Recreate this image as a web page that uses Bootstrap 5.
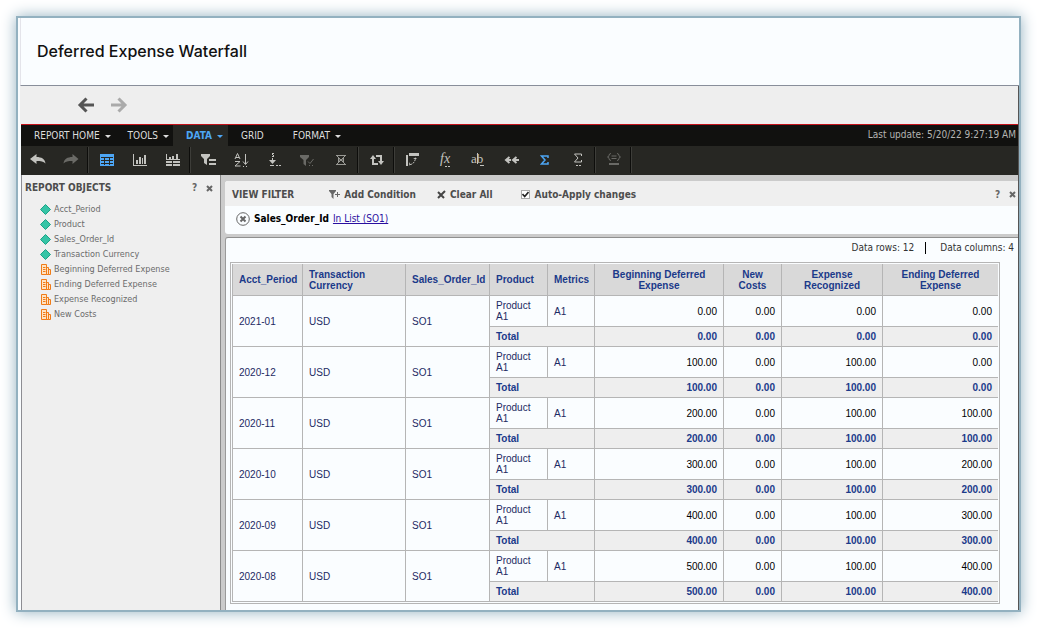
<!DOCTYPE html>
<html lang="en">
<head>
<meta charset="utf-8">
<meta name="viewport" content="width=device-width, initial-scale=1">
<title>Deferred Expense Waterfall</title>
<link href="https://cdn.jsdelivr.net/npm/bootstrap@5.3.0/dist/css/bootstrap.min.css" rel="stylesheet">
<style>
  body { font: 10px/12px "DejaVu Sans Condensed", "DejaVu Sans", sans-serif; background: #fff; color: #333; }
  button { color: inherit; }
  .frame { min-height: calc(100vh - 32px); border: 2px solid #93b1c0; box-shadow: 0 0 14px #93b1c0; background: #fafdff; padding-left: 2px; }
  .page-title { font: 500 16px/20px Inter, sans-serif; color: #111; padding: 23px 16px 24px; border-left: 1px solid #e4e4ea; border-bottom: 1px solid #888e9a; }
  .viewport-area { border-right: 1px solid #555; }
  .history { height: 38px; background: #eee; padding-left: 57px; gap: 15px; }
  .menubar { background: #11110f; border-top: 1px solid #c4121a; height: 22px; margin-left: 1px; color: #ddd; }
  .menubar button { padding: 0 0 0 13px; height: 21px; }
  .caret { display: inline-block; border: 3px solid transparent; border-top-color: currentColor; border-bottom: 0; margin-left: 5px; vertical-align: 1px; }
  .menubar .menu-tools { padding-left: 17px; }
  .menubar .menu-data { background: #272723; color: #4da6f5; font-weight: 700; margin-left: 4px; padding-right: 5px; }
  .menubar .menu-format { padding-left: 29px; }
  .stamp { color: #b4b4b2; padding-right: 2px; }
  .tools { background: #272723; height: 29px; margin-left: 1px; color: #c3c3bf; }
  .tool { width: 33px; height: 27px; }
  .tool svg { display: block; margin: 0 auto; }
  .split { width: 2px; margin: 1px 1px 2px 0; background: #0d0d0b; border-right: 1px solid #3d3d39; }
  .dim { color: #6a6a66; }
  .work { background: #cbcbcb; margin-left: 1px; }
  .objects { width: 200px; background: #efefef; border-left: 1px solid #8d8d93; border-right: 1px solid #8b8b8b; color: #6b6b6b; }
  .head-text { font-weight: 700; color: #4d4d4d; }
  .objects-head { height: 24px; padding: 2px 7px 0 3px; }
  .mini { color: #666; font-weight: 700; width: 7px; margin-left: 8px; }
  .objects li { font-size: 9px; height: 15px; gap: 3px; line-height: 15px; }
  .objects ul { padding: 3px 0 0 18px; }
  .objects li svg { flex: none; }
  .main-col { padding: 6px 0 0 4px; }
  .filter { border-radius: 3px 0 0 3px; background: #fafdff; height: 53px; overflow: hidden; }
  .filter-head { background: #efefef; height: 25px; padding: 2px 2px 0 7px; }
  .filter-head label, .filter-head button { gap: 4px; }
  .act-add { margin-left: 35px; }
  .act-clear { margin-left: 21px; }
  .act-auto { margin-left: 28px; }
  .act-auto input { appearance: none; width: 9px; height: 9px; margin: 0 1px 0 0; border: 1px solid #aaa; background: #fff url("data:image/svg+xml,%3Csvg xmlns='http://www.w3.org/2000/svg' viewBox='0 0 9 9'%3E%3Cpath d='M1.5 4 3.7 6.5 7.5 2' fill='none' stroke='%23222' stroke-width='1.6'/%3E%3C/svg%3E") center/9px; }
  .filter-body { height: 26px; padding-left: 11px; gap: 4px; color: #000; }
  .filter-body a { color: #2a0fa0; }
  .results { margin-top: 3px; border-top: 1px solid #8f8f8f; border-left: 1px solid #9a9a9a; background: #fafdff; border-radius: 3px 0 0 0; padding: 0 18px 6px 4px; }
  .counts { height: 24px; padding-top: 4px; margin-right: -14px; }
  .counts span + span { padding-left: 14px; margin-left: 11px; border-left: 1px solid #000; height: 12px; }
  .grid-box { border: 1px solid #b5b5b5; padding: 1px; }
  .grid { width: 100%; table-layout: fixed; border-collapse: separate; border-spacing: 0; font: 10px/11px "Liberation Sans", Arial, sans-serif; color: #1d2a63; }
  .grid th, .grid td { border: 0 solid #b5b5b5; border-width: 0 0 1px 1px; padding: 0 6px; vertical-align: middle; }
  .grid thead th { background: #d9d9d9; color: #1b3a8a; height: 32px; }
  .grid .num-head { text-align: center; padding: 0 14px; }
  .grid .line td { height: 31px; }
  .grid .num { text-align: right; color: #000; }
  .grid .sum > * { height: 20px; background: #eee; color: #1b3a8a; font-weight: 700; }
  .grid .sum .num { color: #1b3a8a; }
</style>
</head>
<body class="p-3">
<div class="frame d-flex flex-column">
  <h1 class="page-title m-0">Deferred Expense Waterfall</h1>
  <div class="viewport-area d-flex flex-column flex-grow-1">
    <div class="history d-flex align-items-center">
      <button class="border-0 bg-transparent p-0" aria-label="Back"><svg class="d-block" width="18" height="18" viewBox="0 0 18 18" fill="none" stroke="#555" stroke-width="3"><path d="M17 9H4M9.500 2.500 3 9l6.500 6.500"/></svg></button>
      <button class="border-0 bg-transparent p-0" aria-label="Forward"><svg class="d-block" width="18" height="18" viewBox="0 0 18 18" fill="none" stroke="#aaa" stroke-width="3"><path d="M1 9h13M8.500 2.500 15 9l-6.500 6.500"/></svg></button>
    </div>
    <nav class="menubar d-flex">
      <button class="border-0 bg-transparent">REPORT HOME<span class="caret"></span></button>
      <button class="border-0 bg-transparent menu-tools">TOOLS<span class="caret"></span></button>
      <button class="border-0 menu-data">DATA<span class="caret"></span></button>
      <button class="border-0 bg-transparent">GRID</button>
      <button class="border-0 bg-transparent menu-format">FORMAT<span class="caret"></span></button>
      <span class="stamp ms-auto pt-1 mt-n1">Last update: 5/20/22 9:27:19 AM</span>
    </nav>
    <div class="tools d-flex">
      <button class="tool border-0 bg-transparent p-0" aria-label="Undo"><svg width="16" height="14" viewBox="0 0 16 14" fill="currentColor"><path d="M0 6 6.500 1v3c5 0 8.500 2 9 6.500C13.500 8.500 11 8 6.500 8v3z"/></svg></button>
      <button class="tool dim border-0 bg-transparent p-0" aria-label="Redo"><svg width="16" height="14" viewBox="0 0 16 14" fill="currentColor"><path d="M15.500 6 9.500 1v3c-5 0-8.500 2-9 6.500C2.500 8.500 5 8 9.500 8v3z"/></svg></button>
      <span class="split"></span>
      <button class="tool border-0 bg-transparent p-0" aria-label="Grid view"><svg width="14" height="12" viewBox="0 0 14 12"><path fill="#4da6f5" d="M0 0h14v12H0z"/><path stroke="#272723" d="M1 3.500h12M1 6.500h12M1 9.500h12M4.500 3v8M9.500 3v8"/></svg></button>
      <button class="tool border-0 bg-transparent p-0" aria-label="Graph view"><svg width="14" height="12" viewBox="0 0 14 12" fill="currentColor"><path d="M0 0h1v11h13v1H0zM3 6h2v4H3zM6 3h2v7H6zM9 4h1v6H9zM11 1h2v9h-2z"/></svg></button>
      <button class="tool border-0 bg-transparent p-0" aria-label="Grid and graph"><svg width="15" height="12" viewBox="0 0 15 12" fill="currentColor"><path d="M1 0h1v5h13v1H1zM4 3h2v2H4zM7 2h2v3H7zM11 0h2v5h-2zM1 7h6v2H1zM8 7h7v2H8zM1 10h6v2H1zM8 10h7v2H8z"/></svg></button>
      <span class="split"></span>
      <button class="tool border-0 bg-transparent p-0" aria-label="View filter"><svg width="15" height="12" viewBox="0 0 15 12" fill="currentColor"><path d="M0 0h9v2L6 5v6L3 9V5L0 2zM8 5h7v2H8zM8 9h7v2H8z"/></svg></button>
      <button class="tool border-0 bg-transparent p-0" aria-label="Sort"><svg width="15" height="14" viewBox="0 0 15 14" fill="none" stroke="currentColor"><path d="M1 6 3.500.500 6 6M2 4.500h3M1 8.500h5L1 13h5.500M11.500 1v10M9 8.500l2.500 3L14 8.500M9 13.500h1M12 13.500h1"/></svg></button>
      <button class="tool border-0 bg-transparent p-0" aria-label="Drill"><svg width="13" height="13" viewBox="0 0 13 13" fill="currentColor"><path d="M4 0h2v1H5v1h1v2H4V3h1V2H4zM4 5h1v2h3L4.500 11 1 7h3zM2 12h4v1H2zM8 12h2v1H8zM11 12h2v1h-2z"/></svg></button>
      <button class="tool dim border-0 bg-transparent p-0" aria-label="Filter on selections"><svg width="15" height="12" viewBox="0 0 15 12"><path fill="currentColor" d="M0 1h9v2L6 6v6L3.500 10V6L0 3zM9 11h1v1H9zM12 11h1v1h-1z"/><path stroke="currentColor" fill="none" d="m8 7.500 2 2L13.500 5"/></svg></button>
      <button class="tool border-0 bg-transparent p-0" aria-label="Clear thresholds"><svg width="12" height="12" viewBox="0 0 12 12" fill="none" stroke="#999994"><path d="M1 1.500h10M1 10.500h10M1 1l10 10M11 1 1 11M3.500 3v6M8.500 3v6M3 6h6"/></svg></button>
      <span class="split"></span>
      <button class="tool border-0 bg-transparent p-0" aria-label="Swap rows and columns"><svg width="14" height="12" viewBox="0 0 14 12"><g fill="none" stroke="currentColor" stroke-width="2"><path d="M3 4v6h5M6 2h5v6"/></g><path fill="currentColor" d="M0 5 3 1l3 4zM8 7h6l-3 4z"/></svg></button>
      <span class="split"></span>
      <button class="tool border-0 bg-transparent p-0" aria-label="Pivot"><svg width="13" height="13" viewBox="0 0 13 13"><path fill="currentColor" d="M3 0h10v3H3zM0 2h2v11H0z"/><path stroke="currentColor" fill="none" stroke-dasharray="2 1" d="M4 11.500c3 0 5-3 5.500-6"/><path fill="currentColor" d="M7 6h4L9.500 4.500zM4 9v4l-1-2z"/></svg></button>
      <button class="tool border-0 bg-transparent p-0" aria-label="Insert metric"><svg width="14" height="15" viewBox="0 0 14 15"><text x="1" y="11" font-family="Liberation Serif, serif" font-style="italic" font-size="14" fill="currentColor">fx</text><path stroke="currentColor" stroke-dasharray="2 1" d="M6 14.500h5"/></svg></button>
      <button class="tool border-0 bg-transparent p-0" aria-label="Rename"><svg width="15" height="15" viewBox="0 0 15 15"><text x="0" y="11" font-family="Liberation Serif, serif" font-size="13" fill="currentColor">ab</text><path stroke="currentColor" d="M6.500 1v11M9 13.500h4"/></svg></button>
      <button class="tool border-0 bg-transparent p-0" aria-label="Collapse"><svg width="15" height="8" viewBox="0 0 15 8" fill="none" stroke="currentColor" stroke-width="2"><path d="M5.500 1 2 4l3.500 3M2 4h5M12.500 1 9 4l3.500 3M9 4h6"/></svg></button>
      <button class="tool border-0 bg-transparent p-0" aria-label="Show totals"><svg width="10" height="10" viewBox="0 0 10 10" fill="none" stroke="#4da6f5"><path stroke-width="1.500" d="M8 3V1H1.500L5 5 1.500 9H8V7"/></svg></button>
      <button class="tool border-0 bg-transparent p-0" aria-label="Edit totals"><svg width="10" height="13" viewBox="0 0 10 13" fill="none" stroke="currentColor"><path d="M8.500 3V1h-7L5 5 1.500 9h7V7M3 12.500h2M6 12.500h2"/></svg></button>
      <span class="split"></span>
      <button class="tool dim border-0 bg-transparent p-0" aria-label="Group elements"><svg width="14" height="13" viewBox="0 0 14 13" fill="none" stroke="currentColor"><path d="M4 .500C1 .500 3 4 .500 4 3 4 1 7.500 4 7.500M10 .500c3 0 1 3.500 3.500 3.500C11 4 13 7.500 10 7.500M4.500 3h5M4.500 5.500h5"/><path stroke-width="2" d="M2 11h10"/></svg></button>
      <span class="split"></span>
    </div>
    <div class="work d-flex flex-grow-1">
      <aside class="objects flex-shrink-0">
        <div class="objects-head d-flex align-items-center">
          <span class="head-text me-auto">REPORT OBJECTS</span>
          <button class="mini border-0 bg-transparent p-0" aria-label="Help">?</button>
          <button class="mini border-0 bg-transparent p-0" aria-label="Close"><svg class="d-block" width="7" height="7" viewBox="0 0 7 7" stroke="currentColor" stroke-width="2"><path d="m1 1 5 5M6 1 1 6"/></svg></button>
        </div>
        <svg width="0" height="0" class="d-none">
          <symbol id="attr" viewBox="0 0 11 11"><path d="m5.500.500 5 5-5 5-5-5z" fill="#35c4a6" stroke="#1aa387"/></symbol>
          <symbol id="metric" viewBox="0 0 11 11"><path d="M1.500.500h5v10h-5zM6.500 3.500h2v7h-2zM8.500 5.500h2v5h-2z" fill="#ffe3c2" stroke="#f07c18"/><path d="M3 3.500h2.500M3 5.500h2.500M3 7.500h2.500" stroke="#f07c18"/></symbol>
        </svg>
        <ul class="list-unstyled m-0" id="objectList"></ul>
      </aside>
      <main class="main-col flex-grow-1 d-flex flex-column">
        <section class="filter">
          <div class="filter-head head-text d-flex align-items-center">
            <span>VIEW FILTER</span>
            <button class="act-add fw-bold border-0 bg-transparent p-0 d-flex align-items-center"><svg width="11" height="9" viewBox="0 0 11 9" fill="#666"><path d="M0 0h7v1L4.500 4v5L2.500 7V4L0 1zM6 4h5v1H6zM8 2h1v5H8z"/></svg>Add Condition</button>
            <button class="act-clear fw-bold border-0 bg-transparent p-0 d-flex align-items-center"><svg width="9" height="9" viewBox="0 0 9 9" stroke="#444" stroke-width="2"><path d="m1 2 6 6M8 1 1 8"/></svg>Clear All</button>
            <label class="act-auto d-flex align-items-center me-auto"><input type="checkbox" checked>Auto-Apply changes</label>
            <button class="mini border-0 bg-transparent p-0" aria-label="Help">?</button>
            <button class="mini border-0 bg-transparent p-0" aria-label="Close"><svg class="d-block" width="7" height="7" viewBox="0 0 7 7" stroke="currentColor" stroke-width="2"><path d="m1 1 5 5M6 1 1 6"/></svg></button>
          </div>
          <div class="filter-body d-flex align-items-center">
            <button class="border-0 bg-transparent p-0" aria-label="Remove condition"><svg class="d-block" width="14" height="14" viewBox="0 0 14 14" fill="none" stroke="#666"><circle cx="7" cy="7" r="6.300"/><path stroke-width="2" d="m4.500 4.500 5 5M9.500 4.500l-5 5"/></svg></button>
            <b>Sales_Order_Id</b><a href="#">In List (SO1)</a>
          </div>
        </section>
        <section class="results flex-grow-1">
          <div class="counts d-flex justify-content-end"><span>Data rows: 12</span><span>Data columns: 4</span></div>
          <div class="grid-box">
            <table class="grid">
              <colgroup><col style="width:70px"><col style="width:103px"><col style="width:84px"><col style="width:58px"><col style="width:47px"><col style="width:129px"><col style="width:58px"><col style="width:101px"><col style="width:116px"></colgroup>
              <thead><tr><th>Acct_Period</th><th>Transaction<br>Currency</th><th>Sales_Order_Id</th><th>Product</th><th>Metrics</th><th class="num-head">Beginning Deferred Expense</th><th class="num-head">New Costs</th><th class="num-head">Expense Recognized</th><th class="num-head">Ending Deferred Expense</th></tr></thead>
              <tbody id="rows"></tbody>
            </table>
          </div>
        </section>
      </main>
    </div>
  </div>
</div>
<script>
  const objects = [['attr', 'Acct_Period'], ['attr', 'Product'], ['attr', 'Sales_Order_Id'], ['attr', 'Transaction Currency'],
    ['metric', 'Beginning Deferred Expense'], ['metric', 'Ending Deferred Expense'], ['metric', 'Expense Recognized'], ['metric', 'New Costs']];
  document.getElementById('objectList').innerHTML = objects.map(([icon, name]) =>
    `<li class="d-flex align-items-center"><svg width="11" height="11"><use href="#${icon}"/></svg>${name}</li>`).join('');

  const periods = [['2021-01', '0.00', '0.00', '0.00', '0.00'], ['2020-12', '100.00', '0.00', '100.00', '0.00'],
    ['2020-11', '200.00', '0.00', '100.00', '100.00'], ['2020-10', '300.00', '0.00', '100.00', '200.00'],
    ['2020-09', '400.00', '0.00', '100.00', '300.00'], ['2020-08', '500.00', '0.00', '100.00', '400.00']];
  document.getElementById('rows').innerHTML = periods.map(([period, ...values]) =>
    `<tr class="line"><td rowspan="2">${period}</td><td rowspan="2">USD</td><td rowspan="2">SO1</td><td>Product<br>A1</td><td>A1</td>${values.map(v => `<td class="num">${v}</td>`).join('')}</tr>
     <tr class="sum"><th colspan="2">Total</th>${values.map(v => `<td class="num">${v}</td>`).join('')}</tr>`).join('');
</script>
<script src="https://cdn.jsdelivr.net/npm/bootstrap@5.3.0/dist/js/bootstrap.bundle.min.js"></script>
</body>
</html>
